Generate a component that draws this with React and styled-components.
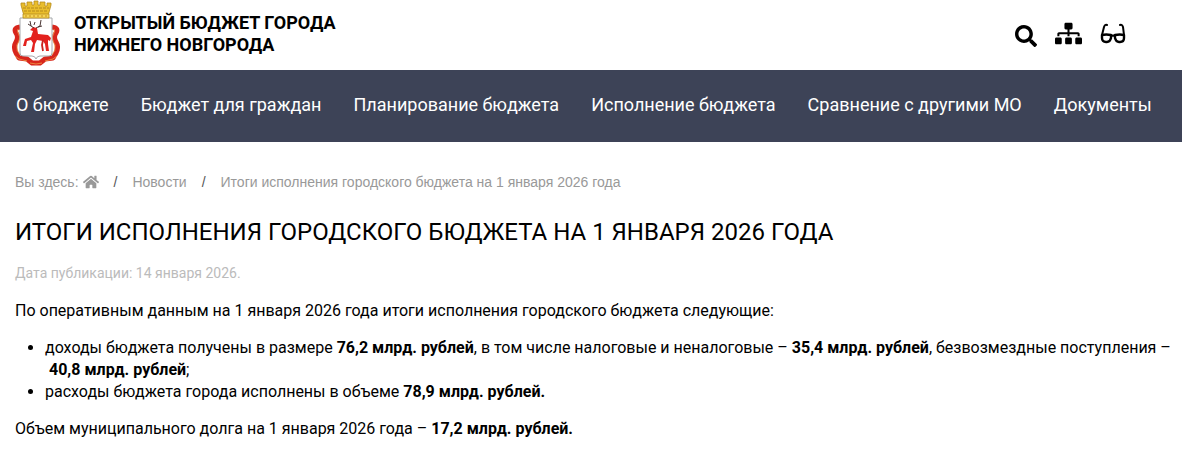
import React from 'react'
import styled, { createGlobalStyle } from 'styled-components'
import { FaSearch, FaSitemap, FaHome } from 'react-icons/fa'

const GlobalStyle = createGlobalStyle`
* {
box-sizing: border-box;
}
body {
margin: 0;
background-color: white;
color: black;
font-family: Roboto, "Liberation Sans", sans-serif;
}
a {
color: inherit;
text-decoration: none;
}
`
const Header = styled.header`
display: flex;
align-items: flex-start;
justify-content: space-between;
height: 70px;
padding: 0 56px 0 12px;
`
const Brand = styled.a`
display: flex;
gap: 14px;
`
const BrandName = styled.span`
padding-top: 12px;
max-width: 280px;
font-size: 18px;
line-height: 22px;
font-weight: 700;
text-transform: uppercase;
`
const Tools = styled.div`
display: flex;
gap: 18px;
padding-top: 20px;
`
const ToolButton = styled.button`
display: flex;
align-items: ${props => props.$align || "center"};
padding: 0;
border: none;
background: none;
color: black;
font-size: ${props => props.$size}px;
cursor: pointer;
`
const Nav = styled.nav`
display: flex;
flex-wrap: wrap;
align-items: center;
gap: 0 32px;
min-height: 72px;
padding: 0 16px 2px;
background-color: #3d4357;
color: white;
font-size: 18px;
line-height: 24px;
white-space: nowrap;
`
const Main = styled.main`
padding: 28px 8px 16px 15px;
`
const Breadcrumbs = styled.ol`
display: flex;
align-items: center;
margin: 0;
padding: 0;
list-style: none;
color: #999;
font-family: "Liberation Sans", Arial, sans-serif;
font-size: 14px;
line-height: 24px;
`
const Crumb = styled.li`
display: flex;
align-items: center;
gap: 4px;
& + &::before {
content: "/";
padding: 0 11px 0 15px;
color: #555;
}
`
const HomeLink = styled.a`
display: flex;
font-size: 16px;
`
const Title = styled.h1`
margin: 24px 0 15px;
font-size: 24px;
line-height: 28px;
font-weight: 400;
text-transform: uppercase;
`
const PublishDate = styled.p`
margin: 0;
color: #bbb;
font-size: 14px;
line-height: 24px;
`
const Text = styled.p`
margin: 15px 0;
font-size: 16px;
line-height: 22px;
`
const List = styled.ul`
margin: 15px 0;
padding-left: 30px;
font-size: 16px;
line-height: 22px;
`
const CrestIcon = styled.svg`
width: 48px;
height: 68px;
flex: none;
`

const links = [
    'О бюджете',
    'Бюджет для граждан',
    'Планирование бюджета',
    'Исполнение бюджета',
    'Сравнение с другими МО',
    'Документы',
]

const Crest = () => (
    <CrestIcon viewBox="0 0 48 68" aria-hidden="true">
        {/* ribbon */}
        <path d="M8 27Q1 28 4 33q3 4 0 9t0 11l3 5 8 1 5 4h8l5-4 8-1 3-5q3-6 0-11t0-9q3-5-4-6" fill="none" stroke="#d8261c" strokeWidth="5" strokeLinejoin="round" />
        <path d="M6 29q-1 3 1 6t-2 10q-1 6 3 10M42 29q1 3-1 6t2 10q1 6-3 10M3 56l4 3 8 2M45 56l-4 3-8 2M18 63l6 1 6-1" fill="none" stroke="#f0a04a" strokeWidth=".8" />
        {/* shield */}
        <path d="M8 18h32v35q0 3-3 3h-9q-3 0-4 3-1-3-4-3h-9q-3 0-3-3z" fill="#fff" stroke="#a5a8ab" />
        {/* crown */}
        <path d="M12 16L9 5V3h4v3h2V2h5v3h2V1h4v4h2V2h5v4h2V3h4v2l-3 11z" fill="#e9bd2c" stroke="#b58a1c" strokeWidth=".8" />
        <path d="M11 14h26v4H11z" fill="#f5d453" stroke="#b58a1c" strokeWidth=".8" />
        <path d="M11 8h26M12 11h24" stroke="#b58a1c" strokeDasharray="3 1" />
        <path d="M13 16h22" stroke="#c98f20" strokeDasharray="2 2" />
        {/* deer */}
        <path d="M18 30l3-3 4 1 1 6 10 1 3 3-1 3-2-1v4l1 7h-3l-1-7-2-3-6-1-2 4-1 8h-3l2-9-2-3-4 1-1 5h-3l2-7 6-2 2-6z" fill="#e3221e" />
        <path d="M31 40l-1 5 1 6" fill="none" stroke="#c9211c" strokeWidth="1.8" />
        <path d="M22 28l-3-2-1-5M19 26l-3-2M24 28l4-2 1-6M26 27l4-1M22 25l1-3" fill="none" stroke="#4a3634" />
    </CrestIcon>
)

const GlassesIcon = () => (
    <svg width="26" height="22" viewBox="0 0 26 22" fill="none" stroke="currentColor" strokeLinecap="round" aria-hidden="true">
        <path d="M7 2Q5 1 4 4L2 12M20 2q2-1 3 2l1 8" strokeWidth="2" />
        <path d="M2 12q4-1 9 0v3q-1 4-4 4H6q-4 0-4-4zM15 12q5-1 9 0v3q0 4-4 4h-1q-3 0-4-4z" strokeWidth="2.4" strokeLinejoin="round" />
        <path d="M11 12.6h4" strokeWidth="2.4" />
    </svg>
)

const App = () => {
    return (
        <>
            <GlobalStyle />
            <Header>
                <Brand href="#">
                    <Crest />
                    <BrandName>Открытый бюджет города Нижнего Новгорода</BrandName>
                </Brand>
                <Tools>
                    <ToolButton type="button" $size={22} $align="flex-end" aria-label="Поиск"><FaSearch /></ToolButton>
                    <ToolButton type="button" $size={27} aria-label="Карта сайта"><FaSitemap /></ToolButton>
                    <ToolButton type="button" $size={26} aria-label="Версия для слабовидящих"><GlassesIcon /></ToolButton>
                </Tools>
            </Header>
            <Nav>
                {links.map((link) => <a href="#" key={link}>{link}</a>)}
            </Nav>
            <Main>
                <Breadcrumbs>
                    <Crumb>Вы здесь: <HomeLink href="#" aria-label="Главная"><FaHome /></HomeLink></Crumb>
                    <Crumb><a href="#">Новости</a></Crumb>
                    <Crumb>Итоги исполнения городского бюджета на 1 января 2026 года</Crumb>
                </Breadcrumbs>
                <Title>Итоги исполнения городского бюджета на 1 января 2026 года</Title>
                <PublishDate>Дата публикации: 14 января 2026.</PublishDate>
                <Text>По оперативным данным на 1 января 2026 года итоги исполнения городского бюджета следующие:</Text>
                <List>
                    <li>
                        доходы бюджета получены в размере <b>76,2 млрд. рублей</b>, в том числе налоговые и неналоговые – <b>35,4 млрд. рублей</b>, безвозмездные поступления – <b>&nbsp;40,8 млрд. рублей</b>;
                    </li>
                    <li>расходы бюджета города исполнены в объеме <b>78,9 млрд. рублей.</b></li>
                </List>
                <Text>Объем муниципального долга на 1 января 2026 года – <b>17,2 млрд. рублей.</b></Text>
            </Main>
        </>
    )
}

export default App
